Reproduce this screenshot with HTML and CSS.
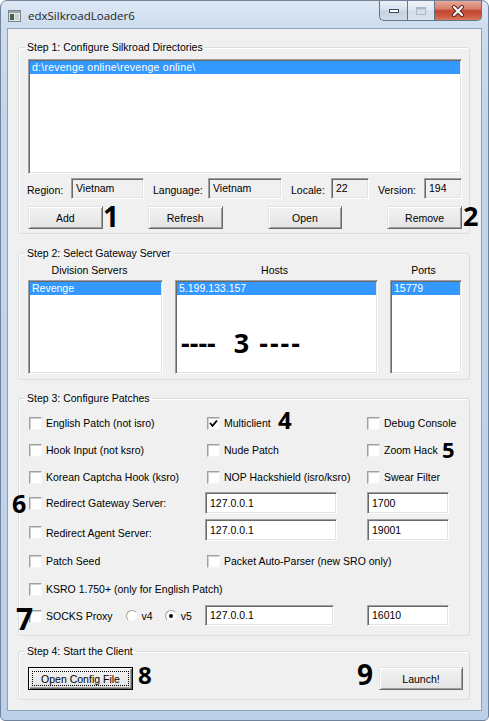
FILE: index.html
```html
<!DOCTYPE html>
<html>
<head>
<meta charset="utf-8">
<title>edxSilkroadLoader6</title>
<link rel="stylesheet" href="styles.css">
</head>
<body>
<div class="window">
  <div class="titlebar">
    <svg class="appicon" width="13" height="12" viewBox="0 0 13 12">
      <rect x="0.5" y="0.5" width="12" height="11" fill="#e4e7e9" stroke="#7d8489"/>
      <rect x="1" y="1" width="11" height="2" fill="#9aa3aa"/>
      <rect x="2" y="4" width="4" height="6" fill="#3f6455"/>
      <rect x="7" y="4" width="4" height="6" fill="#c9cfd3"/>
    </svg>
    <span class="title">edxSilkroadLoader6</span>
    <div class="caption">
      <span class="cbtn cmin"><svg width="12" height="6" viewBox="0 0 12 6"><rect x="1.5" y="1.5" width="9" height="3" fill="#fff" stroke="#3b4a5a"/></svg></span>
      <span class="cbtn cmax"><svg width="12" height="10" viewBox="0 0 12 10"><rect x="1.5" y="1.5" width="9" height="7" fill="none" stroke="#a9b7c6" stroke-width="1"/><rect x="2" y="2" width="8" height="1.5" fill="#a9b7c6"/></svg></span>
      <span class="cbtn cclose"><svg width="14" height="12" viewBox="0 0 14 12"><path d="M3 2 L11 10 M11 2 L3 10" stroke="#5b2118" stroke-width="4" stroke-linecap="round"/><path d="M3 2 L11 10 M11 2 L3 10" stroke="#fff" stroke-width="2.2" stroke-linecap="round"/></svg></span>
    </div>
  </div>

  <div class="client">
    <fieldset class="group g1">
      <legend>Step 1: Configure Silkroad Directories</legend>
      <div class="listbox lb-dirs"><div class="item sel">d:\revenge online\revenge online\</div></div>
      <div class="inforow">
        <span class="lbl l-region">Region:</span><span class="tb ro w-region">Vietnam</span>
        <span class="lbl l-lang">Language:</span><span class="tb ro w-lang">Vietnam</span>
        <span class="lbl l-locale">Locale:</span><span class="tb ro w-small">22</span>
        <span class="lbl l-version">Version:</span><span class="tb ro w-small">194</span>
      </div>
      <div class="btnrow">
        <span class="btn">Add</span>
        <span class="btn">Refresh</span>
        <span class="btn">Open</span>
        <span class="btn">Remove</span>
      </div>
    </fieldset>

    <fieldset class="group g2">
      <legend>Step 2: Select Gateway Server</legend>
      <div class="cols">
        <div class="col c-div">
          <div class="colhead">Division Servers</div>
          <div class="listbox lb-srv"><div class="item sel">Revenge</div></div>
        </div>
        <div class="col c-host">
          <div class="colhead">Hosts</div>
          <div class="listbox lb-srv"><div class="item sel">5.199.133.157</div></div>
        </div>
        <div class="col c-port">
          <div class="colhead">Ports</div>
          <div class="listbox lb-srv"><div class="item sel">15779</div></div>
        </div>
      </div>
    </fieldset>

    <fieldset class="group g3">
      <legend>Step 3: Configure Patches</legend>
      <div class="prow r1">
        <label class="chk k1"><span class="box"></span><span class="txt">English Patch (not isro)</span></label>
        <label class="chk k2"><span class="box checked"><svg width="9" height="9" viewBox="0 0 9 9"><path d="M1 4 L3.5 6.8 L8 1.5" fill="none" stroke="#000" stroke-width="1.8"/></svg></span><span class="txt">Multiclient</span></label>
        <label class="chk k3"><span class="box"></span><span class="txt">Debug Console</span></label>
      </div>
      <div class="prow r2">
        <label class="chk k1"><span class="box"></span><span class="txt">Hook Input (not ksro)</span></label>
        <label class="chk k2"><span class="box"></span><span class="txt">Nude Patch</span></label>
        <label class="chk k3"><span class="box"></span><span class="txt">Zoom Hack</span></label>
      </div>
      <div class="prow r3">
        <label class="chk k1"><span class="box"></span><span class="txt">Korean Captcha Hook (ksro)</span></label>
        <label class="chk k2"><span class="box"></span><span class="txt">NOP Hackshield (isro/ksro)</span></label>
        <label class="chk k3"><span class="box"></span><span class="txt">Swear Filter</span></label>
      </div>
      <div class="prow r4">
        <label class="chk k1"><span class="box"></span><span class="txt">Redirect Gateway Server:</span></label>
        <span class="tb ip">127.0.0.1</span>
        <span class="tb port">1700</span>
      </div>
      <div class="prow r5">
        <label class="chk k1 low"><span class="box"></span><span class="txt">Redirect Agent Server:</span></label>
        <span class="tb ip">127.0.0.1</span>
        <span class="tb port">19001</span>
      </div>
      <div class="prow r6">
        <label class="chk k1"><span class="box"></span><span class="txt">Patch Seed</span></label>
        <label class="chk k2 wide"><span class="box"></span><span class="txt">Packet Auto-Parser (new SRO only)</span></label>
      </div>
      <div class="prow r7">
        <label class="chk k1 span3"><span class="box"></span><span class="txt">KSRO 1.750+ (only for English Patch)</span></label>
      </div>
      <div class="prow r8">
        <div class="socks">
          <label class="chk k1"><span class="box"></span><span class="txt">SOCKS Proxy</span></label>
          <label class="radio rv4"><span class="rdot"></span><span class="txt">v4</span></label>
          <label class="radio rv5"><span class="rdot on"></span><span class="txt">v5</span></label>
        </div>
        <span class="tb ip ip2">127.0.0.1</span>
        <span class="tb port p2">16010</span>
      </div>
    </fieldset>

    <fieldset class="group g4">
      <legend>Step 4: Start the Client</legend>
      <div class="btnrow4">
        <span class="btn btn-default"><span class="focus">Open Config File</span></span>
        <span class="btn btn-launch">Launch!</span>
      </div>
    </fieldset>

    <span class="anno a1">1</span>
    <span class="anno a2">2</span>
    <span class="anno a3"><span>----</span><span class="three">3</span><span class="rdash">----</span></span>
    <span class="anno a4">4</span>
    <span class="anno a5">5</span>
    <span class="anno a6">6</span>
    <span class="anno a7">7</span>
    <span class="anno a8">8</span>
    <span class="anno a9">9</span>
  </div>
</div>
</body>
</html>
```

FILE: styles.css
```css
* { box-sizing: border-box; }
html, body { margin: 0; padding: 0; }
body {
  width: 489px;
  height: 721px;
  overflow: hidden;
  background: #ffffff;
  font-family: "Liberation Sans", Arial, sans-serif;
  font-size: 10.5px;
  color: #000;
}

/* ---------- window frame ---------- */
.window {
  width: 489px;
  height: 721px;
  border: 1px solid #70839a;
  border-radius: 7px 7px 5px 5px;
  background: linear-gradient(to bottom, #dde8f4 0px, #cddcee 26px, #c2d6eb 120px, #bcd1e9 100%);
  padding: 0 6px 9px 6px;
  display: flex;
  flex-direction: column;
}
.titlebar {
  height: 27px;
  display: flex;
  align-items: flex-start;
  flex: none;
}
.appicon { margin: 9px 0 0 1px; flex: none; }
.title {
  margin: 7px 0 0 7px;
  font-family: "Open Sans", "Noto Sans", sans-serif;
  font-size: 11.5px;
  line-height: 15px;
  color: #1e1e1e;
}
.caption {
  margin-left: auto;
  display: flex;
  height: 20px;
}
.cbtn {
  height: 20px;
  display: flex;
  align-items: center;
  justify-content: center;
  border: 1px solid #61758b;
  border-top: none;
}
.cmin {
  width: 28px;
  border-right: none;
  border-radius: 0 0 0 5px;
  background: linear-gradient(to bottom, #e9eff6 0%, #d6e1ec 48%, #c3d1e0 52%, #cfdbe8 100%);
}
.cmax {
  width: 27px;
  border-right: none;
  background: linear-gradient(to bottom, #eef3f8 0%, #dfe7f0 48%, #d3dde9 52%, #dae3ee 100%);
}
.cclose {
  width: 48px;
  border-radius: 0 0 5px 0;
  background: linear-gradient(to bottom, #e8a899 0%, #d7806d 40%, #c3462f 52%, #cc5a3f 80%, #dc7b5d 100%);
}

.client {
  flex: 1;
  position: relative;
  background: #f0f0f0;
  border: 1px solid #8ea3ba;
  padding: 0 11px 0 10px;
}

/* ---------- group boxes ---------- */
.group {
  margin: 0;
  border: 1px solid #d5dfe5;
  border-radius: 3px;
  box-shadow: inset 1px 1px 0 #ffffff;
  min-width: 0;
}
.group legend {
  padding: 0 2px;
  margin-left: -3px;
  line-height: 13px;
  font-size: 10.5px;
}
.g1 { margin-top: 12px; padding: 5px 7px 4px 9px; }
.g2 { margin-top: 13px; padding: 4px 7px 5px 9px; }
.g3 { margin-top: 12px; padding: 7px 7px 9px 9px; }
.g4 { margin-top: 9px; padding: 9px 7px 9px 9px; }

/* ---------- list boxes ---------- */
.listbox {
  background: #fff;
  border: 1px solid;
  border-color: #a0a0a0 #ffffff #ffffff #a0a0a0;
  box-shadow: inset 1px 1px 0 #696969, inset -1px -1px 0 #e3e3e3;
  padding: 1px;
}
.lb-dirs { height: 115px; }
.lb-srv { height: 94px; }
.item {
  height: 13px;
  line-height: 13px;
  padding-left: 2px;
  white-space: nowrap;
}
.lb-dirs .item { letter-spacing: 0.25px; }
.item.sel { background: #3399ff; color: #fff; }

/* ---------- text boxes ---------- */
.tb {
  display: flex;
  align-items: center;
  background: #fff;
  border: 1px solid;
  border-color: #a0a0a0 #ffffff #ffffff #a0a0a0;
  box-shadow: inset 1px 1px 0 #696969, inset -1px -1px 0 #e3e3e3;
  padding: 0 0 0 4px;
  white-space: nowrap;
}
.tb.ro {
  background: #f0f0f0;
  height: 21px;
  align-items: flex-start;
  padding-top: 3px;
}

/* ---------- step 1 rows ---------- */
.inforow {
  display: flex;
  align-items: center;
  margin-top: 4px;
  margin-left: -1px;
  height: 21px;
}
.lbl { flex: none; padding-top: 2px; }
.l-region { width: 44px; }
.l-lang { width: 55px; margin-left: 9px; }
.l-locale { width: 40px; margin-left: 9px; }
.l-version { width: 46px; margin-left: 9px; }
.w-region { width: 73px; }
.w-lang { width: 74px; }
.w-small { width: 38px; }

.btnrow {
  display: flex;
  gap: 45px;
  margin-top: 7px;
}
.btn {
  width: 75px;
  height: 23px;
  display: flex;
  align-items: center;
  justify-content: center;
  background: linear-gradient(to bottom, #f2f2f2 0%, #ebebeb 50%, #e3e3e3 100%);
  border: 1px solid;
  border-color: #e3e3e3 #696969 #696969 #e3e3e3;
  box-shadow: inset 1px 1px 0 #ffffff, inset -1px -1px 0 #a0a0a0;
  font-size: 10.5px;
  white-space: nowrap;
}

/* ---------- step 2 ---------- */
.cols { display: flex; gap: 12px; }
.col { display: flex; flex-direction: column; }
.c-div { width: 135px; }
.c-host { width: 203px; }
.c-port { width: 72px; }
.colhead {
  height: 13px;
  line-height: 13px;
  text-align: center;
  margin-bottom: 3px;
}
.c-div .colhead { padding-right: 12px; }
.c-host .colhead { padding-right: 4px; }
.c-port .colhead { padding-right: 5px; }

/* ---------- step 3 ---------- */
.prow {
  display: grid;
  grid-template-columns: 177px 162px 1fr;
  align-items: center;
  height: 22px;
}
.r2, .r3, .r5 { margin-top: 5px; }
.r4 { margin-top: 4px; }
.r6 { margin-top: 9px; }
.r7 { margin-top: 6px; }
.r8 { margin-top: 4px; }

.chk {
  display: flex;
  align-items: center;
  white-space: nowrap;
}
.chk.k1 { margin-left: 1px; }
.chk.k2 { margin-left: 2px; }
.chk.wide { grid-column: span 2; }
.chk.span3 { grid-column: 1 / span 3; }
.chk.low { padding-top: 5px; }
.box {
  width: 13px;
  height: 13px;
  flex: none;
  background: #fff;
  border: 1px solid;
  border-color: #a0a0a0 #f4f4f4 #f4f4f4 #a0a0a0;
  box-shadow: inset 1px 1px 0 #d0d0d0;
  display: flex;
  align-items: center;
  justify-content: center;
}
.chk .txt { margin-left: 4px; }

.tb.ip { width: 132px; height: 22px; }
.tb.port { width: 82px; height: 22px; }
.tb.ip2 { width: 129px; height: 21px; }
.tb.p2 { height: 21px; }

.socks {
  display: flex;
  align-items: center;
  padding-top: 2px;
}
.radio { display: flex; align-items: center; }
.rv4 { margin-left: 13px; }
.rv5 { margin-left: 12px; }
.rdot {
  width: 12px;
  height: 12px;
  border-radius: 50%;
  background: #fff;
  border: 1px solid;
  border-color: #a0a0a0 #f0f0f0 #f0f0f0 #a0a0a0;
  display: flex;
  align-items: center;
  justify-content: center;
}
.rdot.on::before {
  content: "";
  width: 4px;
  height: 4px;
  border-radius: 50%;
  background: #000;
}
.radio .txt { margin-left: 4px; }

/* ---------- step 4 ---------- */
.btnrow4 {
  display: flex;
  justify-content: space-between;
}
.btn-default {
  width: 105px;
  border: 1px solid #000;
  box-shadow: inset 1px 1px 0 #ffffff, inset -1px -1px 0 #696969, inset -2px -2px 0 #a0a0a0;
  padding: 3px;
}
.btn-default .focus {
  flex: 1;
  align-self: stretch;
  display: flex;
  align-items: center;
  justify-content: center;
  border: 1px dotted #000;
}
.btn-launch { width: 84px; margin-right: -1px; }

/* ---------- annotations drawn over the screenshot ---------- */
.anno {
  position: absolute;
  font-family: "Open Sans", "Noto Sans", sans-serif;
  font-weight: 700;
  line-height: 1;
  color: #000;
  white-space: nowrap;
}
.a1 { left: 95px; top: 173px; font-size: 28px; }
.a2 { left: 455px; top: 173px; font-size: 27px; }
.a3 { left: 173px; top: 300px; font-size: 27px; display: flex; }
.a3 .three { margin-left: 18px; }
.a3 .rdash { margin-left: 10px; letter-spacing: 2px; }
.a4 { left: 270px; top: 379px; font-size: 24px; }
.a5 { left: 434px; top: 409px; font-size: 22px; }
.a6 { left: 4px; top: 462px; font-size: 25px; }
.a7 { left: 8px; top: 575px; font-size: 30px; }
.a8 { left: 130px; top: 634px; font-size: 24px; }
.a9 { left: 349px; top: 631px; font-size: 28px; }
```
